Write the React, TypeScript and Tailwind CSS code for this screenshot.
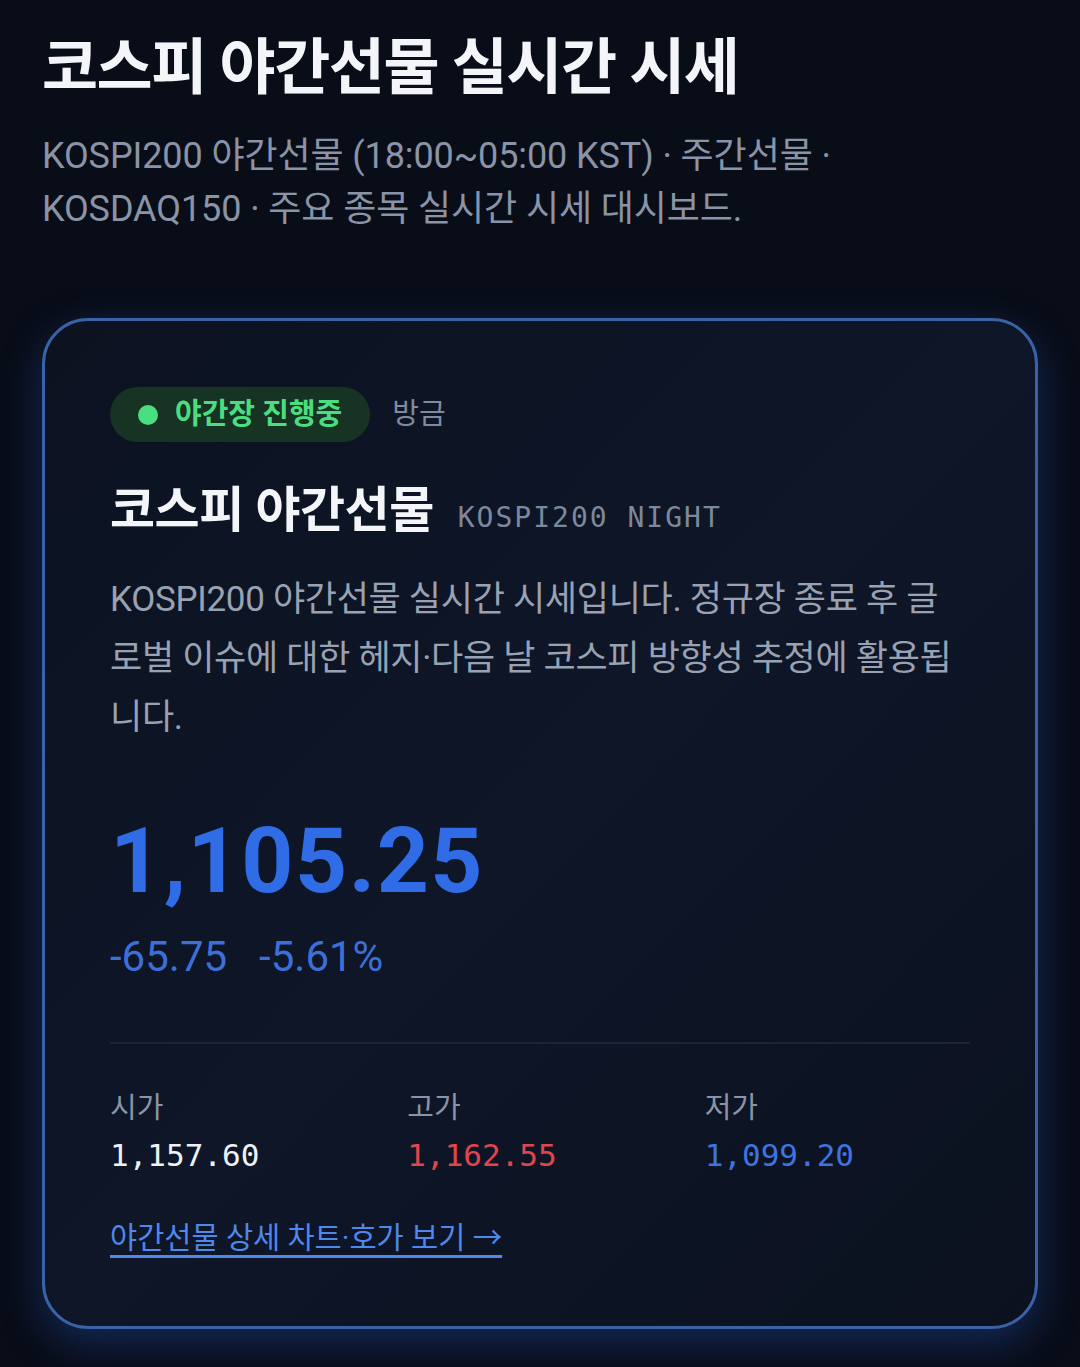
export default function App() {
    const stats = [
        { label: "시가", value: "1,157.60", color: "text-[#eef1f6]" },
        { label: "고가", value: "1,162.55", color: "text-[#e0464b]" },
        { label: "저가", value: "1,099.20", color: "text-[#3f74e0]" },
    ];

    return (
        <div
            className="min-h-[1367px] w-[1080px] bg-[#090d18] px-[42px] pt-[28px] pb-10"
            style={{ fontFamily: "Roboto, 'Noto Sans CJK KR', sans-serif" }}
        >
            <h1 className="text-[61px] font-bold leading-[80px] tracking-[-1.5px] text-[#f3f5f9]">
                코스피 야간선물 실시간 시세
            </h1>
            <p className="mt-[22px] whitespace-nowrap text-[36px] leading-[53px] tracking-[-0.1px] text-[#8a94a6]">
                KOSPI200 야간선물 (18:00~05:00 KST) · 주간선물 ·<br />
                KOSDAQ150 · 주요 종목 실시간 시세 대시보드.
            </p>

            <div className="mt-[82px] rounded-[46px] border-[3px] border-[#3a62a6] bg-gradient-to-br from-[#0c1220] via-[#0e1628] to-[#0b111e] px-[65px] pt-[66px] pb-[68px] shadow-[0_14px_40px_rgba(40,90,200,0.35)]">
                <div className="flex items-center gap-[22px]">
                    <div className="flex h-[55px] items-center gap-[17px] rounded-full bg-[#163323] pl-[28px] pr-[28px]">
                        <span className="h-[20px] w-[20px] rounded-full bg-[#4ade80]" />
                        <span className="text-[29px] font-bold text-[#4ade80]">야간장 진행중</span>
                    </div>
                    <span className="text-[29px] text-[#7f8aa0]">방금</span>
                </div>

                <div className="mt-[39px] flex items-baseline gap-[24px]">
                    <h2 className="text-[49px] font-bold leading-[60px] tracking-[-0.5px] text-[#f3f5f9]">코스피 야간선물</h2>
                    <span
                        className="text-[28px] tracking-[2px] text-[#7d889c]"
                        style={{ fontFamily: "'DejaVu Sans Mono', monospace" }}
                    >
                        KOSPI200 NIGHT
                    </span>
                </div>

                <p className="mt-[29px] whitespace-nowrap text-[35px] leading-[59px] tracking-[-0.3px] text-[#98a2b3]">
                    KOSPI200 야간선물 실시간 시세입니다. 정규장 종료 후 글<br />
                    로벌 이슈에 대한 헤지·다음 날 코스피 방향성 추정에 활용됩<br />
                    니다.
                </p>

                <div className="mt-[64px] text-[91px] font-bold leading-[100px] tracking-[1.5px] text-[#2f6ce6]">1,105.25</div>
                <div className="mt-[21px] flex gap-[32px] text-[42px] leading-[50px] text-[#3c6fd8]">
                    <span>-65.75</span>
                    <span>-5.61%</span>
                </div>

                <div className="mt-[60px] h-[2px] bg-[#1c2435]" />

                <div className="mt-[44px] grid grid-cols-3 gap-8">
                    {stats.map((s) => (
                        <div key={s.label}>
                            <div className="text-[29px] leading-[40px] text-[#8a94a6]">{s.label}</div>
                            <div
                                className={`mt-[7px] text-[31px] leading-[40px] ${s.color}`}
                                style={{ fontFamily: "'DejaVu Sans Mono', monospace" }}
                            >
                                {s.value}
                            </div>
                        </div>
                    ))}
                </div>

                <a
                    href="#"
                    className="mt-[43px] inline-block text-[29.5px] leading-[40px] text-[#4f88ec] underline decoration-[3px] underline-offset-[7px]"
                >
                    야간선물 상세 차트·호가 보기 →
                </a>
            </div>
        </div>
    );
}
